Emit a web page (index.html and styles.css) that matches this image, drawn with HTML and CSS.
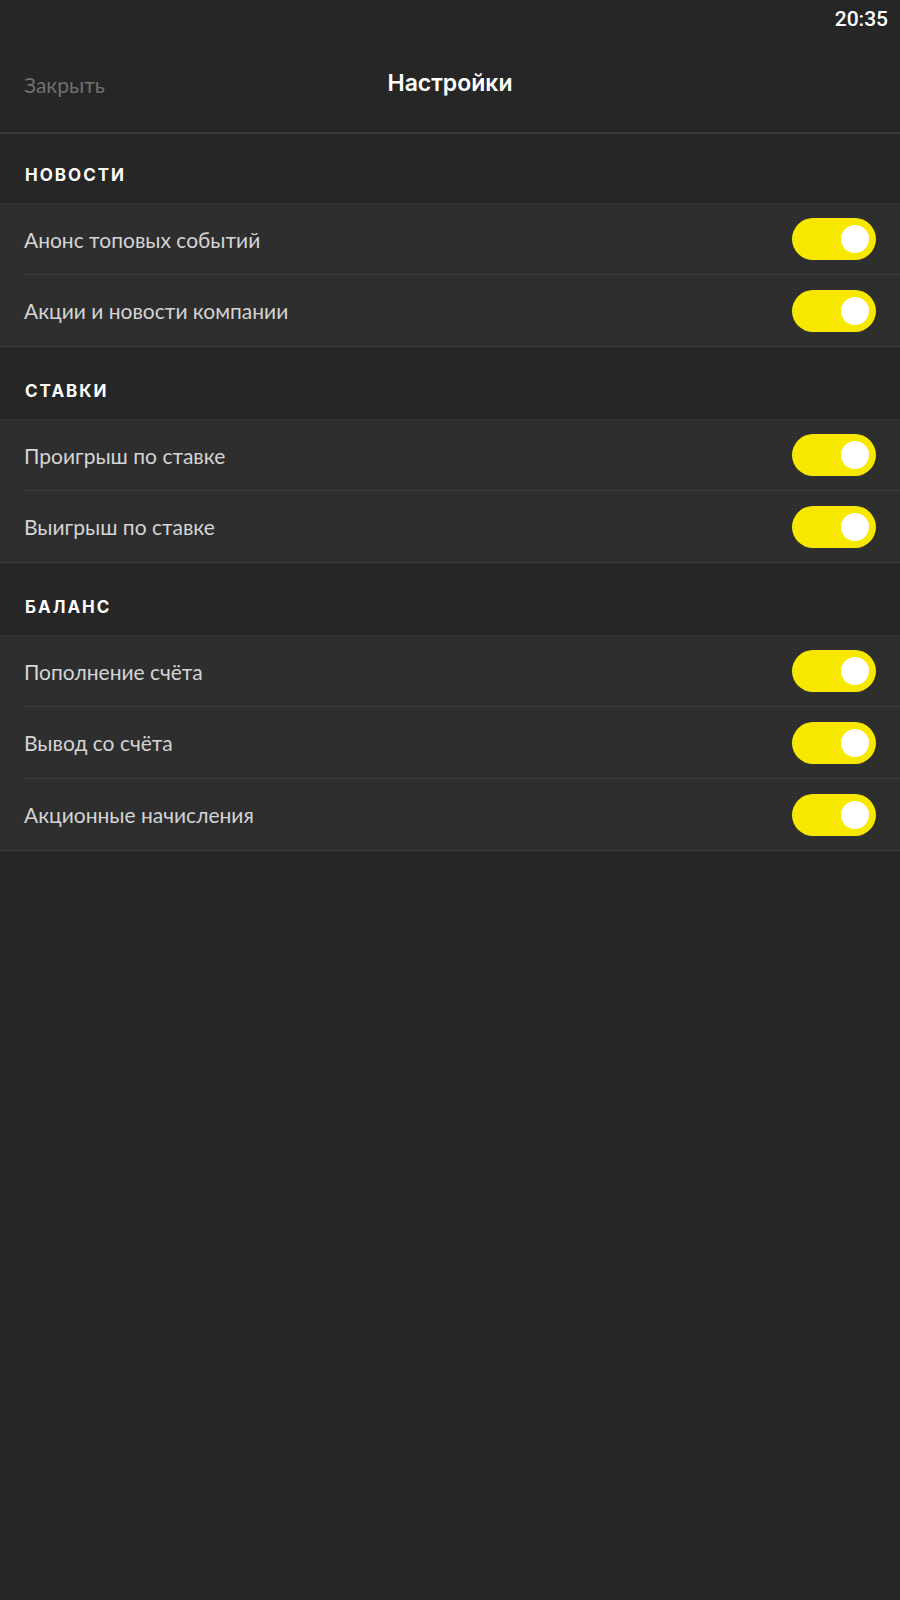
FILE: index.html
```html
<!DOCTYPE html>
<html lang="ru">
<head>
<meta charset="utf-8">
<title>Настройки</title>
<link rel="stylesheet" href="styles.css">
</head>
<body>
<div class="screen">
  <div class="statusbar"><span class="time">20:35</span></div>
  <header class="topbar">
    <span class="close">Закрыть</span>
    <h1 class="title">Настройки</h1>
  </header>

  <section class="group">
    <div class="group-title first">НОВОСТИ</div>
    <div class="rows">
      <div class="row"><span class="label">Анонс топовых событий</span><span class="toggle"><span class="knob"></span></span></div>
      <div class="row"><span class="label">Акции и новости компании</span><span class="toggle"><span class="knob"></span></span></div>
    </div>
  </section>

  <section class="group">
    <div class="group-title">СТАВКИ</div>
    <div class="rows">
      <div class="row"><span class="label">Проигрыш по ставке</span><span class="toggle"><span class="knob"></span></span></div>
      <div class="row"><span class="label">Выигрыш по ставке</span><span class="toggle"><span class="knob"></span></span></div>
    </div>
  </section>

  <section class="group">
    <div class="group-title">БАЛАНС</div>
    <div class="rows">
      <div class="row"><span class="label">Пополнение счёта</span><span class="toggle"><span class="knob"></span></span></div>
      <div class="row"><span class="label">Вывод со счёта</span><span class="toggle"><span class="knob"></span></span></div>
      <div class="row"><span class="label">Акционные начисления</span><span class="toggle"><span class="knob"></span></span></div>
    </div>
  </section>
</div>
</body>
</html>
```

FILE: styles.css
```css
* { box-sizing: border-box; }
html, body {
  margin: 0;
  padding: 0;
  background: #262626;
}
body {
  font-family: Lato, "Noto Sans", sans-serif;
  color: #d4d4d4;
}
.screen {
  width: 900px;
  min-height: 1600px;
  background: #262626;
}
.statusbar {
  height: 36px;
  display: flex;
  justify-content: flex-end;
  align-items: center;
  padding-right: 12px;
  padding-top: 1px;
}
.time {
  font-family: Roboto, sans-serif;
  font-weight: 500;
  font-size: 21px;
  color: #ffffff;
}
.topbar {
  height: 98px;
  display: flex;
  align-items: center;
  justify-content: center;
  position: relative;
  border-bottom: 2px solid #3a3a3a;
  padding-bottom: 2px;
}
.close {
  position: absolute;
  left: 24px;
  top: 36px;
  font-size: 21px;
  color: #6f6f6f;
}
.title {
  margin: 0;
  font-family: Inter, sans-serif;
  font-weight: 600;
  font-size: 23px;
  color: #ffffff;
}
.group-title {
  height: 72px;
  display: flex;
  align-items: flex-end;
  padding: 0 0 18px 25px;
  font-family: Inter, sans-serif;
  font-weight: 700;
  font-size: 17px;
  letter-spacing: 2px;
  color: #ffffff;
}
.group-title.first {
  height: 69px;
  padding-bottom: 18px;
}
.rows {
  background: #2e2e2e;
  border-top: 1px solid #333333;
  border-bottom: 1px solid #3d3d3d;
}
.row {
  height: 70px;
  display: flex;
  align-items: center;
  justify-content: space-between;
  padding: 0 24px;
  position: relative;
}
.row + .row {
  height: 72px;
  border-top: 1px solid #3d3d3d;
  margin-left: 24px;
  padding-left: 0;
}
.label {
  font-size: 21px;
  color: #d4d4d4;
}
.toggle {
  width: 84px;
  height: 42px;
  border-radius: 21px;
  background: #f8e800;
  display: flex;
  align-items: center;
  justify-content: flex-end;
  padding-right: 7px;
}
.knob {
  width: 28px;
  height: 28px;
  border-radius: 50%;
  background: #ffffff;
}
```
